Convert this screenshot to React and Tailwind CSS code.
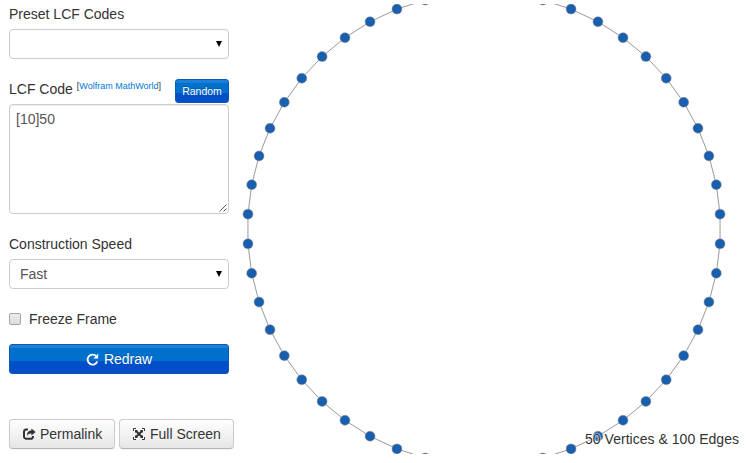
const CENTER_X = 246;
const CENTER_Y = 225;
const RADIUS = 236.5;
const COUNT = 50;

const vertices = Array.from({ length: COUNT }, (_, i) => {
  const a = ((i + 0.5) * 2 * Math.PI) / COUNT;
  return [CENTER_X + RADIUS * Math.cos(a), CENTER_Y + RADIUS * Math.sin(a)];
});

function Graph() {
  return (
    <svg className="mt-1 ml-[9px] block h-[450px] w-[500px] shrink-0" viewBox="0 0 500 450">
      {vertices.map(([x, y], i) => {
        const [nx, ny] = vertices[(i + 1) % COUNT];
        return <line key={i} x1={x} y1={y} x2={nx} y2={ny} stroke="#999" strokeWidth="1" />;
      })}
      {vertices.map(([x, y], i) => (
        <circle key={i} cx={x} cy={y} r="5" fill="#1a5fad" stroke="#999" strokeWidth="0.5" />
      ))}
    </svg>
  );
}

function RedrawIcon() {
  return (
    <svg className="h-[13px] w-[13px]" viewBox="0 0 13 13">
      <path d="M10.3 3.2A5 5 0 1 0 11.3 8.4" fill="none" stroke="currentColor" strokeWidth="1.9" />
      <path d="M12.2 0.6V5.4H7.4Z" fill="currentColor" />
    </svg>
  );
}

function ShareIcon() {
  return (
    <svg className="h-3 w-[13px]" viewBox="0 0 13 12">
      <path
        d="M5 1.6H3.4A2.4 2.4 0 0 0 1 4V8.4A2.4 2.4 0 0 0 3.4 10.8H7.6A2.4 2.4 0 0 0 10 8.6V8"
        fill="none"
        stroke="currentColor"
        strokeWidth="2"
      />
      <path d="M8.4 0.4L12.6 4L8.4 7.6V5.4C6.4 5.3 5.2 5.9 4.4 7.8C3.6 4.6 5.2 2.6 8.4 2.5Z" fill="currentColor" />
    </svg>
  );
}

function FullScreenIcon() {
  return (
    <svg className="h-3 w-3" viewBox="0 0 12 12" fill="none" stroke="currentColor">
      <path d="M0.5 3V0.5H3M9 0.5H11.5V3M11.5 9V11.5H9M3 11.5H0.5V9" strokeWidth="1" />
      <path d="M3 3L9 9M9 3L3 9" strokeWidth="2" />
      <path d="M2 5V2H5ZM7 2H10V5ZM10 7V10H7ZM5 10H2V7Z" fill="currentColor" stroke="none" />
    </svg>
  );
}

function Select({ value }) {
  return (
    <div className="flex h-[30px] items-center justify-between rounded-[4px] border border-[#ccc] bg-white pr-[6px] pl-[10px] text-[#555]">
      <span>{value}</span>
      <svg className="h-[6px] w-[6px] text-black" viewBox="0 0 6 6">
        <path d="M0 0H6L3 6Z" fill="currentColor" />
      </svg>
    </div>
  );
}

const blue =
  "rounded-[3px] border border-[#0d58b0] text-white [text-shadow:0_-1px_0_rgba(0,0,0,0.25)]";
const gray =
  "flex h-[30px] items-center rounded-[4px] border border-[#ccc] border-b-[#b3b3b3] bg-linear-to-b from-white to-[#e6e6e6] text-[#333] [text-shadow:0_1px_1px_rgba(255,255,255,0.75)] shadow-[0_1px_2px_rgba(0,0,0,0.05)]";

export default function App() {
  return (
    <div className="relative flex h-[463px] w-[748px] overflow-hidden bg-white font-['Liberation_Sans',Arial,sans-serif] text-[14px] leading-5 text-[#333]">
      <div className="ml-[9px] flex w-[220px] shrink-0 flex-col pt-1">
        <label className="mb-[5px]">Preset LCF Codes</label>
        <Select value="" />
        <div className="mt-5 flex h-[25px] items-start">
          <span>LCF Code</span>
          <span className="ml-1 text-[9px] leading-[14px]">
            [<a className="text-[#0078d8]">Wolfram MathWorld</a>]
          </span>
          <button
            className={`${blue} ml-auto h-6 w-[54px] bg-[linear-gradient(#1c80da_0_3px,#0070cd_3px_13px,#004fc9_13px)] text-[10.5px] leading-[22px]`}
          >
            Random
          </button>
        </div>
        <div className="flex h-[110px] justify-between rounded-[4px] border border-[#ccc] pt-1 pr-px pb-px pl-[6px] text-[#555] shadow-[inset_0_1px_1px_rgba(0,0,0,0.075)]">
          <span>[10]50</span>
          <svg className="h-2 w-2 self-end" viewBox="0 0 8 8" stroke="#444" strokeWidth="0.9">
            <path d="M0.5 7.5L7.5 0.5M4.5 7.5L7.5 4.5" />
          </svg>
        </div>
        <label className="mt-5 mb-[5px]">Construction Speed</label>
        <Select value="Fast" />
        <label className="mt-5 flex items-center">
          <span className="mr-2 h-3 w-3 rounded-[2px] border border-[#a4a4a4] bg-linear-to-b from-[#ececec] to-[#dcdcdc]" />
          Freeze Frame
        </label>
        <button
          className={`${blue} mt-[15px] flex h-[30px] items-center justify-center gap-[5px] bg-[linear-gradient(#1c80da_0_3px,#0070cd_3px_16px,#004fc9_16px)]`}
        >
          <RedrawIcon />
          <span>Redraw</span>
        </button>
        <div className="mt-[45px] flex gap-1">
          <button className={`${gray} w-[106px] shrink-0 gap-1 pl-[13px]`}>
            <ShareIcon />
            <span>Permalink</span>
          </button>
          <button className={`${gray} w-[115px] shrink-0 gap-[5px] pl-[13px] whitespace-nowrap`}>
            <FullScreenIcon />
            <span>Full Screen</span>
          </button>
        </div>
      </div>
      <Graph />
      <div className="absolute right-[9px] bottom-[14px] tracking-[0.03px] [text-shadow:0_0_2px_#fff,0_0_2px_#fff,0_0_1px_#fff]">
        50 Vertices &amp; 100 Edges
      </div>
    </div>
  );
}
